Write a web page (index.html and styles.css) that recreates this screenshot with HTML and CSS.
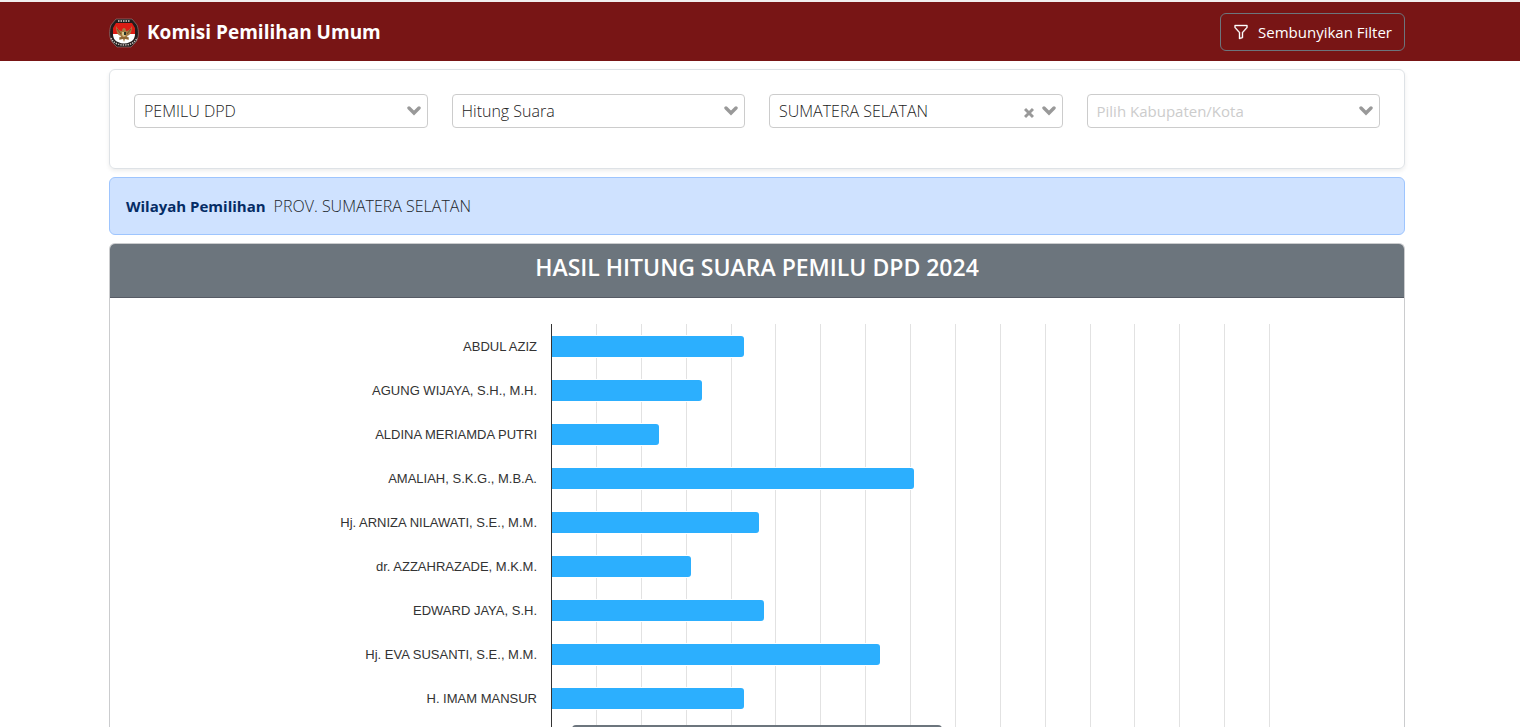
FILE: index.html
```html
<!DOCTYPE html>
<html lang="id">
<head>
<meta charset="utf-8">
<meta name="viewport" content="width=device-width, initial-scale=1">
<title>Komisi Pemilihan Umum</title>
<link rel="stylesheet" href="styles.css">
</head>
<body>
<header class="topbar">
  <div class="container topbar-inner">
    <a class="brand" href="#">
      <svg class="logo" viewBox="0 0 30 32" aria-hidden="true">
        <g transform="translate(0 2)">
        <path d="M7 1h16l5 6c2 6 2 12-1 17l-5 5H8l-5-5C0 19 0 13 2 7z" fill="#211b1b" stroke="#a99b98" stroke-width=".5"/>
        <path d="M7 5h16l3 5v6H4v-6z" fill="#dc1c14"/>
        <path d="M4 16h22c0 4-2 7-5 8-4 2-8 2-12 0-3-1-5-4-5-8z" fill="#fff"/>
        <path d="M7 8c0 5 1 9 5 10l-2 4 4-1 1 3 1-3 4 1-2-4c4-1 5-5 5-10-2 4-4 5-6 5 0-2-1-3-2-3s-2 1-2 3c-2 0-4-1-6-5z" fill="#a67b45"/>
        <path d="M8 11l4 5M22 11l-4 5M10 20h10" stroke="#745025" fill="none"/>
        <path d="M13 14h4v3l-2 2-2-2z" fill="#d9c487"/><path d="M15 14h2v3h-2z" fill="#26342c"/>
        <path d="M9 3h12" stroke="#d8cfcc" stroke-width="1.6" stroke-dasharray="1.5 1"/>
        <path d="M2 20c2 5 7 7 13 7s11-2 13-7" fill="none" stroke="#c9c0bd" stroke-width="1.5" stroke-dasharray="1.4 1"/>
        </g>
      </svg>
      <span>Komisi Pemilihan Umum</span>
    </a>
    <button class="filter-toggle" type="button">
      <svg class="funnel" viewBox="0 0 16 16" aria-hidden="true"><path d="M1.5 1.5A.5.5 0 0 1 2 1h12a.5.5 0 0 1 .5.5v2a.5.5 0 0 1-.128.334L10 8.692V13.5a.5.5 0 0 1-.342.474l-3 1A.5.5 0 0 1 6 14.5V8.692L1.628 3.834A.5.5 0 0 1 1.5 3.5zm1 .5v1.308l4.372 4.858A.5.5 0 0 1 7 8.5v5.306l2-.666V8.5a.5.5 0 0 1 .128-.334L13.5 3.308V2z"/></svg>
      <span>Sembunyikan Filter</span>
    </button>
  </div>
</header>

<main class="page">
  <div class="container page-inner">
  <form class="filters">
    <div class="field">
      <select class="select" aria-label="Jenis pemilu"><option>PEMILU DPD</option></select>
      <svg class="chevron" viewBox="0 0 14 10" aria-hidden="true"><path d="M2 2l5 5 5-5"/></svg>
    </div>
    <div class="field">
      <select class="select" aria-label="Tahapan"><option>Hitung Suara</option></select>
      <svg class="chevron" viewBox="0 0 14 10" aria-hidden="true"><path d="M2 2l5 5 5-5"/></svg>
    </div>
    <div class="field">
      <select class="select" aria-label="Provinsi"><option>SUMATERA SELATAN</option></select>
      <button class="clear" type="button" aria-label="Hapus pilihan"><svg class="cross" viewBox="0 0 10 10" aria-hidden="true"><path d="M1 1l8 8M9 1l-8 8"/></svg></button>
      <svg class="chevron" viewBox="0 0 14 10" aria-hidden="true"><path d="M2 2l5 5 5-5"/></svg>
    </div>
    <div class="field">
      <select class="select select-empty" aria-label="Kabupaten/Kota"><option>Pilih Kabupaten/Kota</option></select>
      <svg class="chevron" viewBox="0 0 14 10" aria-hidden="true"><path d="M2 2l5 5 5-5"/></svg>
    </div>
  </form>

  <section class="region"><strong class="region-label">Wilayah Pemilihan</strong><span class="region-name">PROV. SUMATERA SELATAN</span></section>

  <section class="results">
    <h1 class="results-title">HASIL HITUNG SUARA PEMILU DPD 2024</h1>
    <div class="chart">
      <div class="gridlines" aria-hidden="true"><i></i><i></i><i></i><i></i><i></i><i></i><i></i><i></i><i></i><i></i><i></i><i></i><i></i><i></i><i></i><i></i></div>
      <ul class="names">
        <li>ABDUL AZIZ</li>
        <li>AGUNG WIJAYA, S.H., M.H.</li>
        <li>ALDINA MERIAMDA PUTRI</li>
        <li>AMALIAH, S.K.G., M.B.A.</li>
        <li>Hj. ARNIZA NILAWATI, S.E., M.M.</li>
        <li>dr. AZZAHRAZADE, M.K.M.</li>
        <li>EDWARD JAYA, S.H.</li>
        <li>Hj. EVA SUSANTI, S.E., M.M.</li>
        <li>H. IMAM MANSUR</li>
      </ul>
      <ul class="bars">
        <li><span class="bar" style="width:26.7%"></span></li>
        <li><span class="bar" style="width:20.9%"></span></li>
        <li><span class="bar" style="width:14.9%"></span></li>
        <li><span class="bar" style="width:50.4%"></span></li>
        <li><span class="bar" style="width:28.8%"></span></li>
        <li><span class="bar" style="width:19.4%"></span></li>
        <li><span class="bar" style="width:29.5%"></span></li>
        <li><span class="bar" style="width:45.7%"></span></li>
        <li><span class="bar" style="width:26.7%"></span></li>
      </ul>
    </div>
  </section>
  </div>
</main>
<div class="bottom-panel"></div>
</body>
</html>
```
FILE: styles.css
```css
* { box-sizing: border-box; }
body {
  margin: 0;
  height: 100vh;
  overflow: hidden;
  display: flex;
  flex-direction: column;
  background: #fff;
  color: #212529;
  font-family: "Segoe UI", "Open Sans", "Noto Sans", sans-serif;
  font-size: 15px;
  line-height: 24px;
}
.container {
  width: calc(100% - 30px);
  max-width: 1296px;
  margin: 0 auto;
}
.topbar {
  border-top: 2px solid #f1eeee;
  background: #781515;
  padding: 11px 6px 10px 0;
}
.topbar-inner { display: flex; align-items: center; justify-content: space-between; }
.brand {
  display: flex;
  align-items: center;
  gap: 8px;
  color: #fff;
  font-size: 19px;
  font-weight: 700;
  text-decoration: none;
}
.logo { width: 30px; height: 32px; }
.filter-toggle {
  display: flex;
  align-items: center;
  gap: 9px;
  height: 38px;
  padding: 0 12px;
  border: 1px solid #6c757d;
  border-radius: 6px;
  background: transparent;
  color: #fff;
  font: inherit;
}
.funnel { width: 16px; height: 16px; fill: #fff; stroke: #fff; stroke-width: .4; }
.page {
  flex: 1;
  min-height: 0;
  display: flex;
  padding: 8px 6px 0 0;
}
.page-inner {
  display: flex;
  flex-direction: column;
  gap: 8px;
}
.filters {
  display: grid;
  grid-template-columns: repeat(4, 1fr);
  gap: 24px;
  padding: 24px 24px 40px;
  border: 1px solid #dee2e6;
  border-radius: 6px;
  box-shadow: 0 2px 4px rgba(0, 0, 0, .075);
}
.field { position: relative; }
.select {
  display: block;
  appearance: none;
  width: 100%;
  height: 34px;
  padding: 0 36px 0 9px;
  border: 1px solid #ccc;
  border-radius: 4px;
  background: #fff;
  color: #222;
  font: inherit;
  font-size: 16px;
  font-weight: 300;
}
.select-empty { color: #ccc; font-size: 15px; font-weight: 400; }
.chevron {
  position: absolute;
  top: 12px;
  right: 7px;
  width: 14px;
  height: 10px;
  fill: none;
  stroke: #999;
  stroke-width: 3.4;
  stroke-linecap: round;
  pointer-events: none;
}
.clear {
  position: absolute;
  top: 13px;
  right: 29px;
  display: flex;
  padding: 0;
  border: 0;
  background: transparent;
}
.cross { width: 10px; height: 12px; stroke: #999; stroke-width: 3; }
.region {
  display: flex;
  gap: 8px;
  padding: 16px;
  border: 1px solid #9ec5fe;
  border-radius: 6px;
  background: #cfe2ff;
}
.region-label { color: #052c65; font-weight: 700; }
.region-name { font-size: 16px; font-weight: 300; }
.results {
  flex: 1;
  min-height: 0;
  display: flex;
  flex-direction: column;
  border: 1px solid #cbccce;
  border-bottom: 0;
  border-radius: 6px 6px 0 0;
}
.results-title {
  margin: 0;
  padding: 9px 16px 15px;
  border-bottom: 1px solid #565b65;
  border-radius: 5px 5px 0 0;
  background: #6c757d;
  color: #fff;
  font-size: 23px;
  font-weight: 600;
  line-height: 29px;
  text-align: center;
}
.chart {
  flex: 1;
  min-height: 0;
  display: grid;
  grid-template-columns: 441fr 719fr 134fr;
  grid-template-rows: minmax(0, 1fr);
  padding-top: 26px;
}
.names, .bars { margin: 0; padding: 0; list-style: none; grid-row: 1; }
.names {
  grid-column: 1;
  padding: 1px 14px 0 0;
  text-align: right;
  color: #333;
  font-family: "Liberation Sans", Arial, sans-serif;
  font-size: 13px;
}
.names li { height: 44px; line-height: 44px; }
.gridlines {
  grid-area: 1 / 2;
  display: grid;
  grid-template-columns: repeat(16, 1fr);
  border-left: 1px solid #333;
}
.gridlines i { border-right: 1px solid #e2e2e2; }
.bars { grid-area: 1 / 2; padding-left: 1px; }
.bars li { display: flex; height: 44px; padding-top: 12px; }
.bar {
  height: 21px;
  border-radius: 0 3px 3px 0;
  background: #2caffe;
  box-shadow: 0 -1px #fff, 0 1px #fff;
}
.bottom-panel {
  position: fixed;
  left: 572px;
  bottom: -6px;
  width: 370px;
  height: 8px;
  border-radius: 4px 4px 0 0;
  background: #6c757d;
}
```
